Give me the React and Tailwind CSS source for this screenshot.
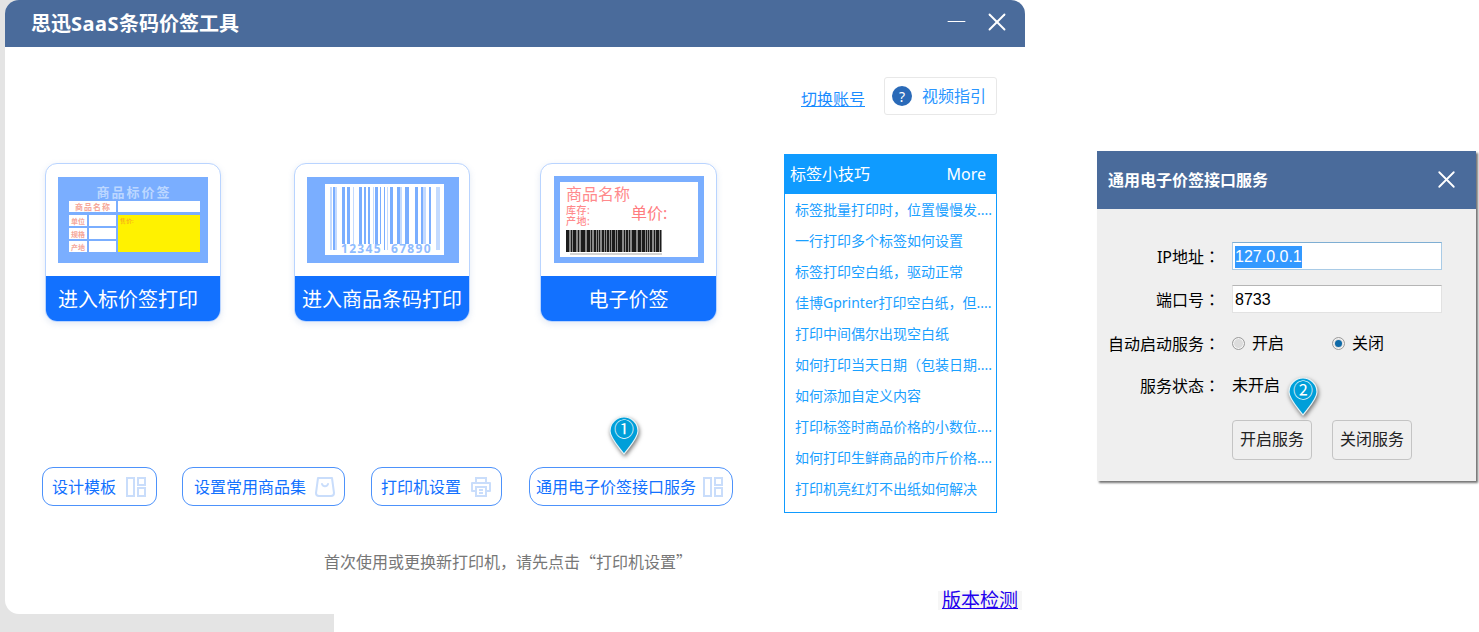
import { X, Minus } from 'lucide-react';

const tips = [
    '标签批量打印时，位置慢慢发....',
    '一行打印多个标签如何设置',
    '标签打印空白纸，驱动正常',
    '佳博Gprinter打印空白纸，但....',
    '打印中间偶尔出现空白纸',
    '如何打印当天日期（包装日期....',
    '如何添加自定义内容',
    '打印标签时商品价格的小数位....',
    '如何打印生鲜商品的市斤价格....',
    '打印机亮红灯不出纸如何解决',
];

// x, width, light of the bars in the blue barcode
const blueBars = [[5,2,1],[8,2,0],[10,2,1],[17,3,0],[22,3,0],[28,1,1],[34,3,0],[39,2,0],[43,2,0],[48,1,1],[50,3,0],[55,1,0],[59,1,0],[62,1,1],[65,3,0],[72,3,0],[75,2,1],[80,4,0],[90,3,0],[96,2,0],[98,3,1],[104,2,0],[111,2,1],[113,2,1]];
const blackBars = [0,2,5,7,9,12,15,17,18,21,23,25,28,31,33,36,37,39,41,44,46,47,50,52,53,55,58,60,61,63,66,68,69,72,74,76,77,80,82,84,85,88,90,92,94];

function LayoutIcon() {
    return (
        <svg width="20" height="20" viewBox="0 0 20 20" fill="none" stroke="#c9ddfb" strokeWidth="2">
            <rect x="1" y="1" width="7" height="18" />
            <rect x="12" y="1" width="7" height="7" />
            <rect x="12" y="11" width="7" height="8" />
        </svg>
    );
}

function BagIcon() {
    return (
        <svg width="20" height="20" viewBox="0 0 20 20" fill="none" stroke="#c9ddfb" strokeWidth="2">
            <path d="M3 1h14l2 15a3 3 0 0 1-3 3H4a3 3 0 0 1-3-3z" strokeLinejoin="round" />
            <path d="M7 7c1 3 5 3 6 0" strokeLinecap="round" />
        </svg>
    );
}

function PrinterIcon() {
    return (
        <svg width="20" height="20" viewBox="0 0 20 20" fill="none" stroke="#c9ddfb" strokeWidth="2">
            <path d="M5 6V1h10v5" />
            <path d="M5 14H1V6h18v8h-4" strokeLinejoin="round" />
            <rect x="5" y="10" width="10" height="9" />
            <path d="M8 13h4M8 16h4" />
        </svg>
    );
}

function Pin({ n, className }) {
    return (
        <div className={`absolute w-[30px] h-[40px] ${className}`}>
            <svg width="30" height="40" viewBox="0 0 30 40" className="drop-shadow-[1px_2px_2px_rgba(0,0,0,0.55)]">
                <path d="M15 1C7.5 1 1 7 1 15c0 7 8 15 14 23 6-8 14-16 14-23C29 7 22.500 1 15 1z" fill="#009fd9" stroke="#e8f4f8" strokeWidth="1.200" />
            </svg>
            <span className="absolute left-0 top-[2px] w-[30px] text-center text-[20px] leading-[24px] text-white">{n}</span>
        </div>
    );
}

function PriceThumb() {
    const cells = [215, 228, 241];
    const names = ['单位', '规格', '产地'];
    return (
        <svg width="150" height="86" viewBox="0 0 150 86">
            <rect width="150" height="86" fill="#7aaeff" />
            <text x="76" y="20" textAnchor="middle" fontSize="13" fontWeight="700" letterSpacing="2" fill="#bcd7ff">商品标价签</text>
            <rect x="11" y="24" width="47" height="11" fill="#fff" />
            <rect x="60" y="24" width="82" height="11" fill="#fff" />
            <text x="35" y="33" textAnchor="middle" fontSize="8" fontWeight="700" letterSpacing="1" fill="#f5a79a">商品名称</text>
            {cells.map((y, i) => (
                <g key={y}>
                    <rect x="11" y={y - 177} width="18" height="11" fill="#fff" />
                    <rect x="31" y={y - 177} width="27" height="11" fill="#fff" />
                    <text x="20" y={y - 168} textAnchor="middle" fontSize="7" fontWeight="700" fill="#f5a79a">{names[i]}</text>
                </g>
            ))}
            <rect x="60" y="38" width="82" height="37" fill="#fff200" />
            <text x="62" y="46" fontSize="6" fill="#f59a23">售价:</text>
        </svg>
    );
}

function BarcodeThumb() {
    return (
        <svg width="152" height="86" viewBox="0 0 152 86" className="ml-[1px]">
            <rect width="152" height="86" fill="#7aaeff" />
            <rect x="18" y="7" width="119" height="71" fill="#fff" />
            {blueBars.map(([x, w, light], i) => (
                <rect key={i} x={18 + x} y="10" width={w} height={x < 12 || (x > 57 && x < 64) || x > 109 ? 63 : 57} fill={light ? '#c4dbff' : '#7aaeff'} />
            ))}
            <text x="34" y="76" fontSize="12" letterSpacing="1.300" fontWeight="700" fill="#8fbcff">12345</text>
            <text x="84" y="76" fontSize="12" letterSpacing="1.300" fontWeight="700" fill="#8fbcff">67890</text>
        </svg>
    );
}

function TagThumb() {
    return (
        <svg width="150" height="87" viewBox="0 0 150 87" className="mt-[-1px]">
            <rect x="3" y="3" width="144" height="81" fill="#fff" stroke="#7aaeff" strokeWidth="6" />
            <text fill="#ff8a8c">
                <tspan x="12" y="24" fontSize="16">商品名称</tspan>
                <tspan x="12" y="38" fontSize="10" fontWeight="500" letterSpacing="0.500">库存:</tspan>
                <tspan x="12" y="49" fontSize="10" fontWeight="500" letterSpacing="0.500">产地:</tspan>
            </text>
            <text x="77" y="43" fontSize="16" fill="#ff7c80">单价:</text>
            <rect x="12" y="54" width="96" height="22" fill="#8a8a8a" />
            {blackBars.map((x, i) => (
                <rect key={i} x={12 + x} y="54" width={i % 3 === 0 ? 2 : 1} height="22" fill="#1c1c1c" />
            ))}
            <rect x="16" y="77" width="92" height="2" fill="#d4d4d4" />
        </svg>
    );
}

function Card({ label, left, children, className }) {
    return (
        <div className={`flex h-[159px] flex-col overflow-hidden rounded-[12px] border border-[#b9d4ff] bg-white shadow-[0_2px_6px_rgba(120,150,200,0.2)] ${className}`}>
            <div className="flex h-[112px] shrink-0 justify-center pt-[13px]">{children}</div>
            <div className={`min-h-0 flex-1 overflow-hidden bg-[#1271ff] text-[20px] leading-[48px] text-white ${left ? 'pl-[12px]' : 'text-center'}`}>{label}</div>
        </div>
    );
}

function ToolButton({ label, icon, className, children }) {
    return (
        <button className={`relative flex h-[39px] items-center justify-between rounded-[11px] border border-[#4d92fb] bg-white text-[16px] text-[#1271ff] ${className}`}>
            <span>{label}</span>
            {icon}
            {children}
        </button>
    );
}

function Field({ label, children, className }) {
    return (
        <div className={`flex min-h-[28px] items-center ${className}`}>
            <div className="w-[123px] text-right text-[16px] text-black">
                {label}<span className="font-['Noto_Sans_CJK_TC',sans-serif]">：</span>
            </div>
            <div className="ml-[12px] flex flex-1 items-center">{children}</div>
        </div>
    );
}

function Radio({ label, checked, className }) {
    return (
        <div className={`flex items-center ${className}`}>
            <span className="flex h-[13px] w-[13px] items-center justify-center rounded-full border border-[#9c9c9c] bg-[#dcdcdc] shadow-[inset_0_0_0_1px_#f6f6f6]">
                {checked && <span className="h-[7px] w-[7px] rounded-full bg-[#0f6aa8]" />}
            </span>
            <span className="ml-[7px] text-[16px] text-black">{label}</span>
        </div>
    );
}

export default function App() {
    return (
        <div className="relative flex h-[632px] w-[1479px] overflow-hidden bg-white font-['Noto_Sans','Noto_Sans_CJK_SC',sans-serif]">
            {/* grey backdrop left over from the screenshot */}
            <div className="absolute left-0 top-0 h-full w-[334px] bg-[#e4e4e4]" />

            {/* main window */}
            <div className="relative ml-[5px] flex h-[614px] w-[1020px] shrink-0 flex-col rounded-t-[14px] rounded-bl-[14px] bg-white">
                <div className="flex h-[47px] items-center rounded-t-[14px] bg-[#4a6b9b] pl-[26px] pr-[13px]">
                    <div className="flex-1 text-[20px] font-bold text-white">思迅<span className="tracking-[0.5px]">SaaS</span>条码价签工具</div>
                    <Minus size={29} strokeWidth={0.850} className="mb-[4px] mr-[11px] text-white" />
                    <X size={30} strokeWidth={1.500} className="mb-[4px] text-white" />
                </div>

                <div className="flex items-center justify-end pr-[28px] pt-[30px]">
                    <a className="mr-[19px] mt-[6px] text-[16px] text-[#1a8cff] underline">切换账号</a>
                    <div className="flex h-[38px] w-[113px] items-center rounded-[3px] border border-[#e8e8e8] pl-[7px]">
                        <span className="flex h-[20px] w-[20px] items-center justify-center rounded-full bg-[#2a6ab8] text-[14px] text-white">?</span>
                        <span className="ml-[10px] text-[16px] text-[#2a96ff]">视频指引</span>
                    </div>
                </div>

                <div className="mt-[39px] flex">
                    <div className="w-[779px]">
                        <div className="flex pl-[40px] pt-[9px]">
                            <Card label="进入标价签打印" left className="w-[176px]"><PriceThumb /></Card>
                            <Card label="进入商品条码打印" className="ml-[73px] w-[176px]"><BarcodeThumb /></Card>
                            <Card label="电子价签" className="ml-[70px] w-[177px]"><TagThumb /></Card>
                        </div>
                        <div className="mt-[145px] flex pl-[37px]">
                            <ToolButton label="设计模板" icon={<LayoutIcon />} className="w-[115px] pl-[9px] pr-[10px]" />
                            <ToolButton label="设置常用商品集" icon={<BagIcon />} className="ml-[25px] w-[163px] pl-[11px] pr-[9px]" />
                            <ToolButton label="打印机设置" icon={<PrinterIcon />} className="ml-[26px] w-[131px] pl-[9px] pr-[10px]" />
                            <ToolButton label="通用电子价签接口服务" icon={<LayoutIcon />} className="ml-[27px] w-[204px] rounded-[14px] pl-[6px] pr-[9px]">
                                <Pin n="①" className="left-[79px] top-[-52px]" />
                            </ToolButton>
                        </div>
                        <div className="ml-[319px] mt-[43px] whitespace-nowrap font-['Noto_Sans_CJK_SC',sans-serif] text-[16px] leading-[24px] text-[#777]">
                            首次使用或更换新打印机，请先点击“打印机设置”
                        </div>
                    </div>

                    <div className="h-[359px] w-[213px] border border-[#0f9bff]">
                        <div className="flex h-[39px] items-center justify-between bg-[#0f9bff] pb-[2px] pl-[5px] pr-[10px] text-[16px] text-white">
                            <span>标签小技巧</span>
                            <span>More</span>
                        </div>
                        {tips.map((tip) => (
                            <div key={tip} className="whitespace-nowrap pl-[10px] text-[14px] leading-[31px] text-[#1aa0ff]">{tip}</div>
                        ))}
                    </div>
                </div>

                <div className="mt-[18px] flex justify-end pr-[3px]">
                    <a className="bg-[#f6f6f6] px-[4px] text-[19px] leading-[19px] text-[#2200ee] underline">版本检测</a>
                </div>
            </div>

            {/* service dialog */}
            <div className="relative ml-[72px] mt-[151px] h-[330px] w-[379px] shrink-0 bg-[#efefef] shadow-[2px_2px_2px_rgba(0,0,0,0.55)]">
                <div className="flex h-[58px] items-center justify-between bg-[#4a6b9b] pl-[11px] pr-[15px]">
                    <span className="text-[16px] font-bold text-white">通用电子价签接口服务</span>
                    <X size={29} strokeWidth={1.500} className="mb-[1px] text-white" />
                </div>
                <div className="flex flex-col pt-[33px]">
                    <Field label="IP地址">
                        <div className="h-[28px] w-[210px] border border-[#a9cbe6] border-t-[#7eaed3] bg-white pl-[2px] font-['Liberation_Sans','Noto_Sans_CJK_SC',sans-serif] text-[16px] leading-[27px] text-black">
                            <span className="inline-block h-[22px] bg-[#3399ff] leading-[22px] text-white">127.0.0.1</span>
                        </div>
                    </Field>
                    <Field label="端口号" className="mt-[15px]">
                        <div className="h-[28px] w-[210px] border border-[#e2e2e2] border-t-[#b5b5b5] bg-white pl-[2px] font-['Liberation_Sans','Noto_Sans_CJK_SC',sans-serif] text-[16px] leading-[27px] text-black">8733</div>
                    </Field>
                    <Field label="自动启动服务" className="mt-[16px]">
                        <Radio label="开启" className="w-[100px]" />
                        <Radio label="关闭" checked />
                    </Field>
                    <Field label="服务状态" className="mt-[14px]">
                        <span className="text-[16px] text-black">未开启</span>
                    </Field>
                    <div className="ml-[135px] mt-[21px] flex gap-[20px]">
                        <button className="relative h-[40px] w-[80px] rounded-[4px] border border-[#c4c4c4] bg-[#efefef] pb-[2px] text-[16px] text-[#222]">
                            开启服务
                            <Pin n="②" className="left-[55px] top-[-44px]" />
                        </button>
                        <button className="h-[40px] w-[80px] rounded-[4px] border border-[#c4c4c4] bg-[#efefef] pb-[2px] text-[16px] text-[#222]">关闭服务</button>
                    </div>
                </div>
            </div>
        </div>
    );
}
